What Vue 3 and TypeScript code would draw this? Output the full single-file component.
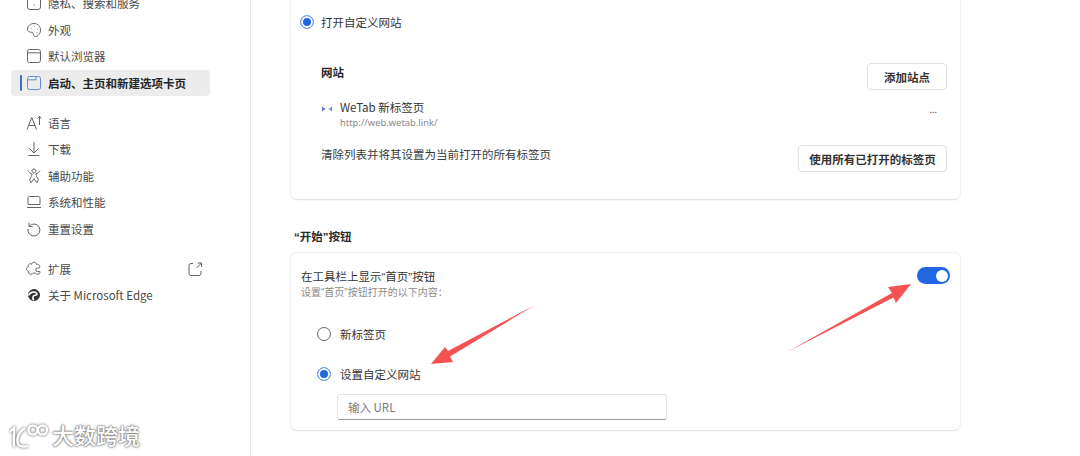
<script setup lang="ts">
const top = [
  { t: '隐私、搜索和服务', i: 'M6 3.5h8a2.5 2.5 0 0 1 2.5 2.5v8a2.5 2.5 0 0 1-2.5 2.5H6A2.5 2.5 0 0 1 3.5 14V6A2.5 2.5 0 0 1 6 3.5ZM10 11.5v1' },
  { t: '外观', i: 'M10 3.5c3.8 0 6.500 2.800 6.500 6.500 0 3.600-2.800 6.500-5 6.500-1.500 0-2-1-2-2 0-1.500-1-2.500-2.500-2.300-1.500.2-3.500-1.200-3.500-3.200C3.500 6 6.500 3.500 10 3.500ZM7 8.200v.6M10.500 6.300v.6M13.500 8.800v.6M13 12.300v.6' },
  { t: '默认浏览器', i: 'M5.500 3.500h9a2 2 0 0 1 2 2v9a2 2 0 0 1-2 2h-9a2 2 0 0 1-2-2v-9a2 2 0 0 1 2-2ZM3.500 6.800h13' },
]
const mid = [
  { t: '语言', i: 'M3 16.500 7.800 4.500 12.500 16.500M4.700 12.500h6.300M15.500 12V3.500M13.500 5.500l2-2 2 2' },
  { t: '下载', i: 'M10 3v10.500M5.500 9.500l4.500 4.500 4.500-4.500M4.500 16.500h11' },
  { t: '辅助功能', i: 'M4 4.500c1 2 2.500 3 4 3.300-.2 2-.8 3.500-2.500 5.500l1.500 3.500 3-4 3 4 1.500-3.500c-1.700-2-2.300-3.500-2.500-5.500 1.500-.3 3-1.300 4-3.300M10 3a2 2 0 1 0 .01 0' },
  { t: '系统和性能', i: 'M5.500 4.500h9a1.500 1.500 0 0 1 1.500 1.500v6.500H4V6a1.500 1.500 0 0 1 1.500-1.500ZM3 15.500h14' },
  { t: '重置设置', i: 'M5 3.800v3.700h3.700M5.200 7.300A6 6 0 1 1 4 10' },
]
const ext = 'M7.500 5.500c.3-3 4.700-3 5 0 1.500-1 4 .8 3 3M16 12.500c.5 2-2 3.500-3.500 2.500-.5-.5-1-1-2.500-1s-1.500.5-2 1c-1.500 1-4-.5-3.500-2.500-1-1-2.500-1-2-3 .3-1.500 1.500-1.500 2-2-1-2 1.500-3.500 3-2.500M15.500 9h-2a1.700 1.700 0 0 0 0 3.500h2.500'
</script>

<template>
  <div class="page">
    <aside class="sidebar">
      <div class="nav-group first">
        <div v-for="n in top" :key="n.t" class="nav">
          <svg class="ico" viewBox="0 0 20 20"><path :d="n.i" /></svg>
          <span>{{ n.t }}</span>
        </div>
        <div class="nav active">
          <i class="bar"></i>
          <svg class="ico blue" viewBox="0 0 20 20">
            <path d="M5.500 3.500h9a2 2 0 0 1 2 2v9a2 2 0 0 1-2 2h-9a2 2 0 0 1-2-2v-9a2 2 0 0 1 2-2ZM3.500 6.800h8.500V3.500" />
          </svg>
          <span>启动、主页和新建选项卡页</span>
        </div>
      </div>
      <div class="nav-group">
        <div v-for="n in mid" :key="n.t" class="nav">
          <svg class="ico" viewBox="0 0 20 20"><path :d="n.i" /></svg>
          <span>{{ n.t }}</span>
        </div>
      </div>
      <div class="nav-group">
        <div class="nav">
          <svg class="ico" viewBox="0 0 20 20"><path :d="ext" /></svg>
          <span>扩展</span>
          <svg class="ico link" viewBox="0 0 20 20">
            <path d="M8 4.500H6a2 2 0 0 0-2 2v8a2 2 0 0 0 2 2h8a2 2 0 0 0 2-2v-2.500M12.500 4h4v4M16.500 4l-5 5" />
          </svg>
        </div>
        <div class="nav">
          <svg class="ico" viewBox="0 0 20 20">
            <circle class="edge" cx="10" cy="10" r="5.500" />
            <path class="edge-cut" d="M4.500 10.500c1-3 5.500-4.500 8-2.500 1.200 1 .5 2.200-1.200 2.200-2.300 0-3.300 2.500-1.500 5" />
          </svg>
          <span>关于 Microsoft Edge</span>
        </div>
      </div>
    </aside>

    <main class="main">
      <section class="card one">
        <div class="radio-row">
          <span class="radio on"></span>
          <span>打开自定义网站</span>
        </div>
        <div class="inner">
          <div class="spread site-head">
            <strong>网站</strong>
            <button class="btn add">添加站点</button>
          </div>
          <div class="spread site">
            <div class="site-main">
              <svg class="fav" viewBox="0 0 12 8">
                <path d="M1 1.500 4.500 4 1 6.500Z" fill="#6a6fd8" />
                <path d="M11 1.500 7.500 4 11 6.500Z" fill="#7d8fe0" />
              </svg>
              <div>
                <div class="site-name">WeTab 新标签页</div>
                <div class="site-url">http://web.wetab.link/</div>
              </div>
            </div>
            <span class="more">...</span>
          </div>
          <div class="spread clear">
            <span>清除列表并将其设置为当前打开的所有标签页</span>
            <button class="btn wide">使用所有已打开的标签页</button>
          </div>
        </div>
      </section>

      <h2 class="title">“开始”按钮</h2>

      <section class="card two">
        <div class="spread home">
          <div>
            <div class="home-name">在工具栏上显示“首页”按钮</div>
            <div class="home-sub">设置“首页”按钮打开的以下内容：</div>
          </div>
          <span class="toggle"><i></i></span>
        </div>
        <div class="options">
          <div class="radio-row opt">
            <span class="radio"></span>
            <span>新标签页</span>
          </div>
          <div class="radio-row opt second">
            <span class="radio on"></span>
            <span>设置自定义网站</span>
          </div>
          <input class="url" placeholder="输入 URL" />
        </div>
      </section>
    </main>

    <svg class="arrows" viewBox="0 0 1080 456">
      <path d="M787 352 L892 293 L888 287 L911 284 L896 303 L893.500 297.500 Z" fill="#f55353" />
      <path d="M535 305 L448 351 L445 347 L431 364 L453 362 L450 356.500 Z" fill="#f55353" />
    </svg>

    <div class="mark">
      <svg class="mark-logo" viewBox="0 0 44 28">
        <g class="mark-g">
          <path d="M2 12 6 8v19M17 8C10 12 8 20 10 24c2 3 6 3 10 2" />
          <circle cx="25" cy="10" r="4.500" />
          <circle cx="34.500" cy="10" r="4.500" />
        </g>
      </svg>
      <span>大数跨境</span>
    </div>
  </div>
</template>

<style>
html, body { margin: 0; background: #fff; }
</style>

<style scoped>
.page {
  position: relative;
  width: 1080px;
  height: 456px;
  overflow: hidden;
  display: flex;
  background: #fff;
  color: #2b2b2b;
  font: 11.500px/16px "Noto Sans CJK SC", "Noto Sans", sans-serif;
}
.sidebar {
  width: 251px;
  flex: none;
  box-sizing: border-box;
  border-right: 1px solid #e8e8e8;
  padding-left: 11px;
  padding-right: 40px;
  background: #fff;
}
.nav-group { margin-bottom: 13.500px; }
.nav-group.first { margin-top: -10px; }
.nav {
  position: relative;
  display: flex;
  align-items: center;
  height: 26.500px;
  padding-left: 13px;
  gap: 4px;
  color: #4a4a4a;
}
.active {
  background: #ececec;
  border-radius: 4px;
  color: #262626;
  font-weight: 700;
}
.bar {
  position: absolute;
  left: 9px;
  top: 5px;
  width: 2px;
  height: 16px;
  background: #3a6fc8;
  border-radius: 1px;
}
.ico {
  width: 20px;
  height: 20px;
  flex: none;
  fill: none;
  stroke: #666;
  stroke-width: 1;
}
.ico.blue { stroke: #5f8fd6; }
.ico.link { margin-left: auto; margin-right: 5px; }
.edge { fill: #333; stroke: #333; }
.edge-cut { stroke: #fff; stroke-width: 1.600; }

.main {
  flex: 1;
  padding-left: 39px;
  padding-right: 119px;
  background: #fff;
  min-width: 0;
}
.card {
  box-sizing: border-box;
  background: #fff;
  border: 1px solid #f0f0f0;
  border-bottom-color: #e4e4e4;
  border-radius: 7px;
  box-shadow: 0 1px 1px rgba(0,0,0,.03);
}
.card.one {
  height: 220px;
  margin-top: -20px;
  padding: 31px 13px 0 9px;
}
.radio-row {
  display: flex;
  align-items: center;
  gap: 7px;
  height: 20px;
  color: #333;
}
.radio {
  width: 14px;
  height: 14px;
  border-radius: 50%;
  border: 1px solid #666;
  box-sizing: border-box;
  background: #fff;
  flex: none;
}
.radio.on {
  border: 1px solid #6f9ce8;
  background: #1f66e0;
  box-shadow: inset 0 0 0 2px #fff;
}
.inner { padding-left: 21px; margin-top: 31px; }
.spread { display: flex; justify-content: space-between; align-items: center; }
.site-head strong { font-size: 11.500px; color: #262626; margin-bottom: 10px; }
.site-head { height: 27px; }
.btn {
  font: 700 11.500px/16px "Noto Sans CJK SC", sans-serif;
  color: #333;
  background: #fff;
  border: 1px solid #e0e0e0;
  border-radius: 4px;
  height: 27px;
  padding: 0;
}
.btn.add { width: 80px; }
.btn.wide { width: 149px; }
.site { margin-top: 9px; height: 30px; }
.site-main { display: flex; align-items: center; gap: 7px; }
.fav { width: 12px; height: 8px; margin-bottom: 10px; }
.site-name { font-size: 11.500px; line-height: 15px; color: #333; }
.site-url { font: 9.400px/11px "Noto Sans", sans-serif; color: #8a8a8a; margin-top: 2px; }
.more { color: #555; font-size: 9px; margin-right: 10px; margin-top: -8px; }
.clear { margin-top: 16px; height: 27px; }
.clear span { color: #3a3a3a; margin-bottom: 10px; }

.title {
  margin: 29px 0 7px 4px;
  font: 700 11.500px/16px "Liberation Sans", "Noto Sans CJK SC", sans-serif;
  color: #2b2b2b;
}
.card.two {
  height: 179px;
  padding: 16px 10px 0 10px;
}
.home-name { font-family: "Liberation Sans", "Noto Sans CJK SC", sans-serif; line-height: 16px; color: #333; }
.home-sub { font: 10px/13px "Liberation Sans", "Noto Sans CJK SC", sans-serif; color: #8a8a8a; margin-top: .5px; }
.toggle {
  display: flex;
  justify-content: flex-end;
  align-items: center;
  width: 33px;
  height: 17px;
  border-radius: 9px;
  background: #1f66e0;
  margin-top: -16px;
  padding-right: 2.500px;
  box-sizing: border-box;
}
.toggle i { width: 12px; height: 12px; border-radius: 50%; background: #fff; }
.options { padding-left: 16px; margin-top: 25.500px; }
.opt { gap: 9px; }
.second { margin-top: 20px; }
.url {
  display: block;
  box-sizing: border-box;
  width: 330px;
  height: 26px;
  margin: 10px 0 0 20px;
  border: 1px solid #e6e6e6;
  border-bottom: 1px solid #999;
  border-radius: 3px;
  padding: 0 10px;
  font: 11.500px "Noto Sans CJK SC", sans-serif;
  outline: none;
}
.url::placeholder { color: #7a7a7a; }

.arrows { position: absolute; inset: 0; width: 1080px; height: 456px; pointer-events: none; }
.mark {
  position: absolute;
  left: 8px;
  top: 419px;
  display: flex;
  align-items: center;
  color: #fff;
  font-size: 22px;
  line-height: 30px;
  font-weight: 500;
  text-shadow: 0 0 1px #666, 0 0 2px #777, 0 0 3px #999;
}
.mark-logo { width: 44px; height: 28px; overflow: visible; }
.mark-g { fill: none; stroke: #fff; stroke-width: 2.2; filter: drop-shadow(0 0 1.500px #555); }
</style>
